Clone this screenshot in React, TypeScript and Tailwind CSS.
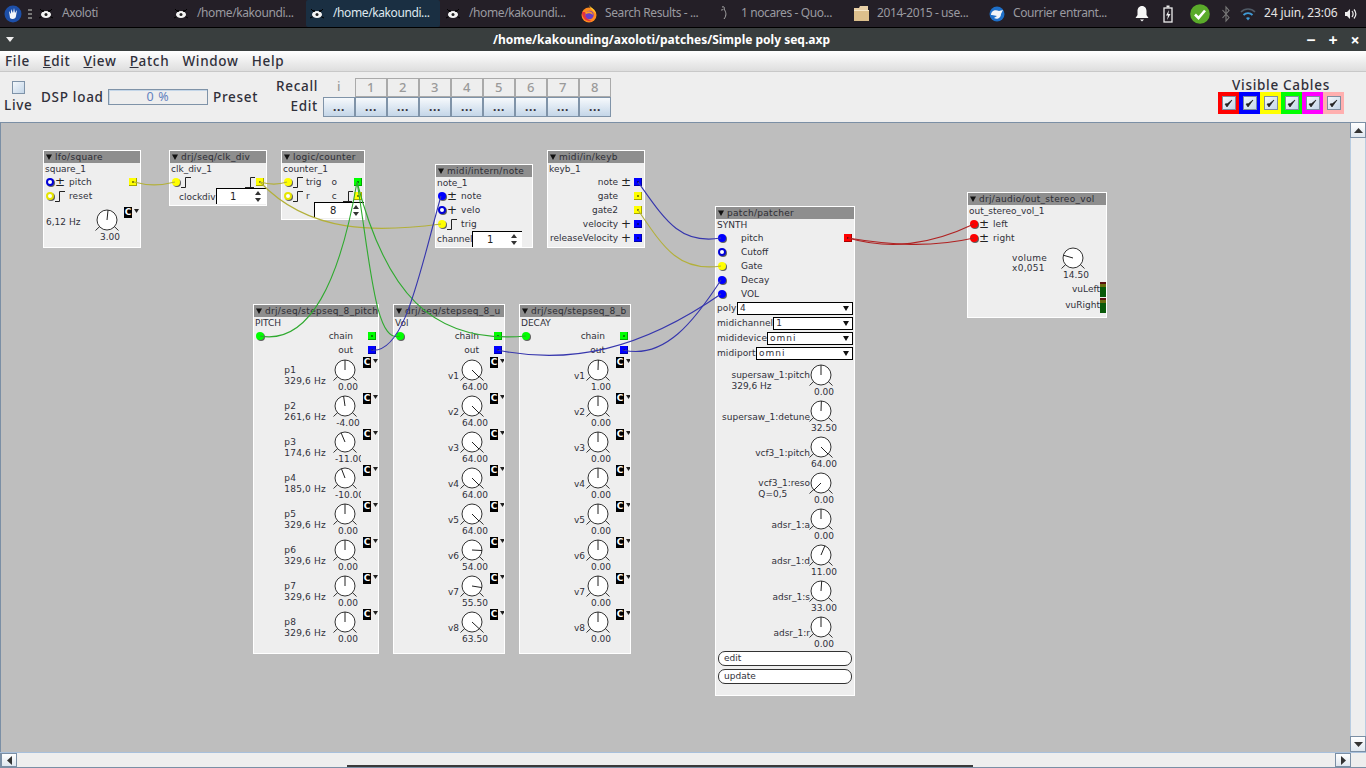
import React from "react";

const UI = "font-['Noto_Sans',sans-serif]";
const NODE_FONT = "font-['DejaVu_Sans',sans-serif]";

function BugIcon() {
  return (
    <svg width="16" height="16" viewBox="0 0 16 16" className="shrink-0">
      <path d="M2 3 L5 6 M14 3 L11 6 M1 12 L5 10 M15 12 L11 10" stroke="#000" strokeWidth="1" />
      <ellipse cx="8" cy="8.5" rx="5" ry="3.6" fill="#f4f4f4" />
      <circle cx="8" cy="8.5" r="1.5" fill="#222" />
      <circle cx="5" cy="5" r="1" fill="#000" />
      <circle cx="11" cy="5" r="1" fill="#000" />
    </svg>
  );
}
function FirefoxIcon() {
  return (
    <svg width="16" height="18" viewBox="0 0 16 18" className="shrink-0">
      <circle cx="8" cy="10" r="7.5" fill="#ff8a1f" />
      <path d="M8 0 C10 3 14 4 15 9 C13 6 10 5 8 0Z" fill="#ffcf30" />
      <path d="M1 7 C1 14 6 17 11 16 C7 15 4 12 4 7Z" fill="#e5313c" />
      <circle cx="8.5" cy="10" r="4.2" fill="#6a3ec6" />
      <path d="M5 7 C8 5 12 7 12 10 C10 8 7 8 5 9Z" fill="#ff9b26" />
    </svg>
  );
}
function QuodIcon() {
  return (
    <svg width="16" height="18" viewBox="0 0 16 18" className="shrink-0">
      <path d="M5 2 C7 1 8 3 7 4 C9 7 10 10 7 14 M4 5 C5 5 6 5 6 4" stroke="#aaa" strokeWidth="1" fill="none" />
    </svg>
  );
}
function FolderIcon() {
  return (
    <svg width="16" height="17" viewBox="0 0 16 17" className="shrink-0">
      <path d="M1 3 H6 L7 1 H15 V16 H1Z" fill="#e9d0a6" />
      <rect x="1" y="5" width="15" height="11" fill="#dcbf8c" />
      <rect x="1" y="5" width="15" height="1" fill="#f5e6c8" />
    </svg>
  );
}
function ThunderIcon() {
  return (
    <svg width="16" height="17" viewBox="0 0 16 17" className="shrink-0">
      <circle cx="8" cy="9" r="7.5" fill="#1e6fc8" />
      <path d="M2 10 C2 6 6 4 10 6 L14 5 L12 9 C12 13 8 15 5 13 L8 11 L3 10Z" fill="#f2f5f8" />
    </svg>
  );
}

function Tab({ icon, text, active, first }: { icon: React.ReactNode; text: string; active?: boolean; first?: boolean }) {
  return (
    <div className={`${first ? "w-[135px]" : "w-[136px]"} shrink-0 h-full flex items-center`}>
      <div
        className={`flex items-center gap-[8px] pl-[3px] h-[27px] w-[134px] rounded-[2px] ${
          active ? "bg-[#1a2f42] text-[#dfe8ef]" : "text-[#9a9aa0]"
        }`}
      >
        {icon}
        <span className="text-[12px] tracking-[-0.4px] whitespace-nowrap -mt-[2px]">{text}</span>
      </div>
    </div>
  );
}

function Taskbar() {
  return (
    <div className={`h-[27px] bg-[#241f27] flex items-center ${UI} shrink-0`}>
      <div className="w-[35px] shrink-0 h-full flex items-center pl-[4px] gap-[6px]">
        <svg width="18" height="18" viewBox="0 0 18 18" className="shrink-0">
          <circle cx="9" cy="9" r="8.5" fill="#1d4fa8" />
          <path d="M5 6 L7 9 L7 4 L9 8 L10 3 L11 8 L13 5 L12 11 C12 14 8 15 6 13Z" fill="#f4f6fa" />
        </svg>
        <div className="flex flex-col gap-[2px]">
          <div className="w-[4px] h-[2px] bg-[#777]" />
          <div className="w-[4px] h-[2px] bg-[#777]" />
          <div className="w-[4px] h-[2px] bg-[#777]" />
        </div>
      </div>
      <Tab first icon={<BugIcon />} text="Axoloti" />
      <Tab icon={<BugIcon />} text="/home/kakoundi..." />
      <Tab active icon={<BugIcon />} text="/home/kakoundi..." />
      <Tab icon={<BugIcon />} text="/home/kakoundi..." />
      <Tab icon={<FirefoxIcon />} text="Search Results - ..." />
      <Tab icon={<QuodIcon />} text="1 nocares - Quo..." />
      <Tab icon={<FolderIcon />} text="2014-2015 - use..." />
      <Tab icon={<ThunderIcon />} text="Courrier entrant..." />
      <div className="flex items-center h-full">
        <svg width="14" height="17" viewBox="0 0 14 17" className="ml-[13px] shrink-0">
          <path d="M7 1 C10 1 11.5 3.5 11.5 6 V10 L13.5 13 H0.5 L2.5 10 V6 C2.5 3.5 4 1 7 1Z" fill="#f6f6f6" />
          <path d="M5 14.5 H9 L7 16.5Z" fill="#f6f6f6" />
        </svg>
        <svg width="10" height="18" viewBox="0 0 10 18" className="ml-[14px] shrink-0">
          <rect x="1" y="3" width="8" height="14" fill="none" stroke="#eee" strokeWidth="1.3" />
          <rect x="3.5" y="0.5" width="3" height="2" fill="#eee" />
          <path d="M6 5 L3 10.5 H5 L4 15 L7.5 9 H5.3Z" fill="#eee" />
        </svg>
        <svg width="20" height="20" viewBox="0 0 20 20" className="ml-[17px] shrink-0">
          <circle cx="10" cy="10" r="9.8" fill="#5aaa2a" />
          <path d="M5 10.5 L8.5 14 L15 6.5" stroke="#fff" strokeWidth="2.6" fill="none" />
        </svg>
        <svg width="8" height="18" viewBox="0 0 8 18" className="ml-[12px] shrink-0">
          <path d="M0.5 5 L7 12.5 L4 16 V2 L7 5.5 L0.5 13" stroke="#7a7a7a" strokeWidth="1.1" fill="none" />
        </svg>
        <svg width="16" height="16" viewBox="0 0 16 16" className="ml-[10px] shrink-0">
          <path d="M1 6 C5 2 11 2 15 6" stroke="#4f5a66" strokeWidth="1.6" fill="none" />
          <path d="M3.5 9 C6 6.5 10 6.5 12.5 9" stroke="#3f9ad6" strokeWidth="1.8" fill="none" />
          <path d="M6 12 C7 11 9 11 10 12 L8 14.5Z" fill="#3f9ad6" />
        </svg>
        <span className="ml-[8px] text-[12px] tracking-[-0.1px] text-[#e4e4e4] whitespace-nowrap -mt-[2px]">24 juin, 23:06</span>
        <svg width="14" height="14" viewBox="0 0 14 14" className="ml-[7px] shrink-0">
          <path d="M1 5 H3 L6 2 V12 L3 9 H1Z" fill="#eee" />
          <path d="M8 4 C9.5 6 9.5 8 8 10 M10 2.5 C12.5 5.5 12.5 8.5 10 11.5" stroke="#eee" strokeWidth="1.2" fill="none" />
        </svg>
      </div>
    </div>
  );
}

function TitleBar() {
  return (
    <div className={`h-[24px] bg-[#393e3e] border-t border-[#000] flex items-center relative ${UI} shrink-0`}>
      <svg width="8" height="5" viewBox="0 0 8 5" className="ml-[6px]">
        <path d="M0 0 H8 L4 5Z" fill="#eee" />
      </svg>
      <div className="flex-1 text-center text-white font-bold text-[12px] whitespace-nowrap pl-[9px]">
        /home/kakounding/axoloti/patches/Simple poly seq.axp
      </div>
      <div className="flex items-center text-white font-bold text-[16px] leading-none">
        <span className="w-[22px] text-center">−</span>
        <span className="w-[22px] text-center">+</span>
        <span className="w-[22px] text-center">×</span>
      </div>
    </div>
  );
}

function MenuBar() {
  const M = ({ t, u }: { t: string; u?: boolean }) => (
    <span>
      {u ? <span className="underline">{t[0]}</span> : t[0]}
      {t.slice(1)}
    </span>
  );
  return (
    <div className={`h-[21px] bg-gradient-to-b from-[#ffffff] to-[#dedede] border-b border-[#c8c8c8] flex items-center pl-[5px] gap-[13px] text-[13.5px] font-medium tracking-[0.7px] text-[#30303a] ${UI} shrink-0`}>
      <M t="File" />
      <M t="Edit" u />
      <M t="View" u />
      <M t="Patch" u />
      <M t="Window" />
      <M t="Help" />
    </div>
  );
}

function PresetBtn({ t, edit }: { t: string; edit?: boolean }) {
  return edit ? (
    <div className="w-[32px] h-[20px] border border-[#7f93a8] bg-gradient-to-b from-[#f6f9fc] to-[#c4d6e8] flex items-center justify-center text-[12px] font-bold text-[#30303a] leading-none">
      {t}
    </div>
  ) : (
    <div className="w-[32px] h-[19px] border border-[#aaa] bg-[#eee] flex items-center justify-center text-[13px] text-[#9a9a9a] leading-none">
      {t}
    </div>
  );
}

function Toolbar() {
  const bgs = [
    "bg-[#ff0000]",
    "bg-[#0000ff]",
    "bg-[#ffff00]",
    "bg-[#00ff00]",
    "bg-[#ff00ff]",
    "bg-[#ffafaf]",
  ];
  return (
    <div className={`h-[50px] bg-[#eeeeee] flex items-center text-[13.5px] font-medium tracking-[0.7px] text-[#30303a] ${UI} shrink-0`}>
      <div className="w-[37px] pl-[4px] flex flex-col items-start">
        <div className="ml-[8px] w-[13px] h-[13px] border border-[#7f93a8] bg-gradient-to-br from-[#f4f8fb] to-[#c4d6e8]" />
        <div className="leading-[18px] mt-[2px]">Live</div>
      </div>
      <div className="ml-[4px] w-[67px]">DSP load</div>
      <div className="w-[100px] h-[16px] border border-[#7f93a8] bg-[#eeeeee] shadow-[inset_1px_1px_0_#c4d6e8] flex items-center justify-center text-[12.5px] font-normal text-[#6382bf]">
        0 %
      </div>
      <div className="ml-[5px] w-[63px]">Preset</div>
      <div className="flex flex-col">
        <div className="flex items-center h-[19px]">
          <div className="w-[42px] -mt-[1px]">Recall</div>
          <div className="ml-[5px] w-[32px] text-center text-[#9a9a9a] font-medium text-[13px]">i</div>
          {["1", "2", "3", "4", "5", "6", "7", "8"].map((n) => (
            <PresetBtn key={n} t={n} />
          ))}
        </div>
        <div className="flex items-center h-[20px]">
          <div className="w-[42px] text-right">Edit</div>
          <div className="ml-[5px] flex">
            {[0, 1, 2, 3, 4, 5, 6, 7, 8].map((n) => (
              <PresetBtn key={n} t="..." edit />
            ))}
          </div>
        </div>
      </div>
      <div className="ml-auto mr-[22px] flex flex-col items-center">
        <div className="leading-[14px] mt-[-2px]">Visible Cables</div>
        <div className="flex">
          {bgs.map((b) => (
            <div key={b} className={`w-[21px] h-[22px] ${b} flex items-center justify-center`}>
              <div className="w-[14px] h-[14px] border border-[#7f8ea0] bg-gradient-to-br from-[#f4f8fb] to-[#c4d6e8] flex items-center justify-center">
                <svg width="9" height="9" viewBox="0 0 9 9">
                  <path d="M1 5 L3 8 L8 1 L3.6 4.6 Z" fill="#222" stroke="#222" strokeWidth="0.7" />
                </svg>
              </div>
            </div>
          ))}
        </div>
      </div>
    </div>
  );
}

/* ---------- Node parts ---------- */
function T({ children, cls = "" }: { children: React.ReactNode; cls?: string }) {
  return <span className={`mt-[2px] whitespace-nowrap ${cls}`}>{children}</span>;
}
function Inlet({ c, hollow }: { c: string; hollow?: boolean }) {
  const color =
    c === "b"
      ? hollow
        ? "border-[2px] border-[#0000d8] bg-white"
        : "bg-[#0000ff]"
      : c === "y"
      ? hollow
        ? "border-[2px] border-[#e6e600] bg-white"
        : "bg-[#ffff00]"
      : c === "g"
      ? "bg-[#00ff00]"
      : "bg-[#ff0000]";
  return (
    <div className={`w-[8px] h-[8px] rounded-full shrink-0 ml-[2px] ${color} shadow-[1px_1px_0_rgba(0,0,0,0.6)]`} />
  );
}
function Outlet({ c }: { c: string }) {
  const color =
    c === "b" ? "bg-[#0000ff]" : c === "y" ? "bg-[#ffff00]" : c === "g" ? "bg-[#00ff00]" : "bg-[#ff0000]";
  return (
    <div className={`w-[8px] h-[8px] shrink-0 ${color} shadow-[inset_-1px_-1px_0_rgba(0,0,0,0.35)] flex items-center justify-center`}>
      <div className="w-[2px] h-[2px] bg-black/45" />
    </div>
  );
}
function PulseUp() {
  return (
    <svg width="10" height="11" viewBox="0 0 10 11" className="shrink-0">
      <path d="M0 10.5 H4.5 V0.5 H10" stroke="#222" strokeWidth="1" fill="none" />
    </svg>
  );
}
function PulseDown() {
  return (
    <svg width="10" height="11" viewBox="0 0 10 11" className="shrink-0">
      <path d="M0 10.5 H9 M5.5 10.5 V0.5 H10" stroke="#222" strokeWidth="1" fill="none" />
    </svg>
  );
}
function Sym({ s }: { s: "pm" | "p" | "pulse" }) {
  return (
    <div className="w-[12px] shrink-0 flex items-center justify-center text-[12px] leading-none text-[#222]">
      {s === "pm" ? "±" : s === "p" ? "+" : <PulseUp />}
    </div>
  );
}
function InRow({ c, hollow, s, t }: { c: string; hollow?: boolean; s: "pm" | "p" | "pulse"; t: string }) {
  return (
    <div className="h-[14px] flex items-center">
      <Inlet c={c} hollow={hollow} />
      <Sym s={s} />
      <T cls="ml-[3px] tracking-[0.1px]">{t}</T>
    </div>
  );
}
function Spin({ v, w, vx }: { v: string; w: string; vx: string }) {
  return (
    <div className={`${w} h-[16px] bg-white border-t border-l border-black flex items-center text-[10px] text-[#222] relative shrink-0`}>
      <span className={vx}>{v}</span>
      <svg width="6" height="11" viewBox="0 0 6 11" className="ml-auto mr-[5px]">
        <path d="M3 0 L6 4 H0Z M3 11 L0 7 H6Z" fill="#333" />
      </svg>
    </div>
  );
}
function Header({ t }: { t: string }) {
  return (
    <div className="h-[12px] bg-[#8e8e8e] flex items-center pl-[2px] text-[#2c2c33] tracking-[0.3px] whitespace-nowrap overflow-hidden shrink-0">
      <svg width="6" height="6" viewBox="0 0 6 6" className="shrink-0 mr-[3px]">
        <path d="M0 0.5 H6 L3 6Z" fill="#111" />
      </svg>
      <span className="mt-[2px]">{t}</span>
    </div>
  );
}
function Name({ t }: { t: string }) {
  return <div className="h-[12px] leading-[12px] pl-[1px] whitespace-nowrap">{t}</div>;
}
function Knob({ a }: { a: number }) {
  const r = (a * Math.PI) / 180;
  const x = 13 + Math.sin(r) * 10;
  const y = 13 - Math.cos(r) * 10;
  return (
    <svg width="26" height="24" viewBox="0 0 26 24" className="block shrink-0">
      <path d="M1.5 23.5 L6 19.2 M24.5 23.5 L20 19.2" stroke="#333" strokeWidth="1" />
      <circle cx="13" cy="13" r="10" fill="#fff" stroke="#333" strokeWidth="1" />
      <line x1="13" y1="13" x2={x} y2={y} stroke="#222" strokeWidth="1" />
    </svg>
  );
}
function CBox() {
  return (
    <div className="flex items-start shrink-0">
      <div className="w-[8px] h-[11px] bg-black text-white text-[9px] font-bold leading-[11px] text-center">C</div>
      <svg width="5" height="4" viewBox="0 0 5 4" className="ml-[2px] mt-[2px]">
        <path d="M0 0 H5 L2.5 4Z" fill="#222" />
      </svg>
    </div>
  );
}
function KnobCol({ a, v }: { a: number; v: string }) {
  return (
    <div className="w-[30px] shrink-0">
      <Knob a={a} />
      <div className="ml-[3px] w-[26px] h-[12px] leading-[12px] text-center whitespace-nowrap overflow-hidden">{v}</div>
    </div>
  );
}
function Param({
  l1,
  l2,
  a,
  v,
  lw,
  c = true,
  over,
}: {
  l1: string;
  l2?: string;
  a: number;
  v: string;
  lw: string;
  c?: boolean;
  over?: boolean;
}) {
  return (
    <div className="h-[36px] flex items-start">
      <div className={`${lw} h-[36px] pt-[2px] flex items-center justify-end shrink-0`}>
        <div className={`whitespace-nowrap leading-[11px] ${over ? "-mr-[2px]" : ""}`}>
          <div>{l1}</div>
          {l2 ? <div>{l2}</div> : null}
        </div>
      </div>
      <KnobCol a={a} v={v} />
      {c ? (
        <div className="ml-[1px]">
          <CBox />
        </div>
      ) : null}
    </div>
  );
}
function Node({ pos, title, name, children }: { pos: string; title: string; name: string; children: React.ReactNode }) {
  return (
    <div className={`absolute ${pos} bg-[#eeeeee] border border-white ${NODE_FONT} text-[9px] text-[#30303a] flex flex-col overflow-hidden`}>
      <Header t={title} />
      <Name t={name} />
      {children}
    </div>
  );
}
function RightRow({ t, c, s }: { t: string; c: string; s?: "pm" | "p" }) {
  return (
    <div className="h-[14px] flex items-center justify-end mr-[2px]">
      <T>{t}</T>
      <div className="w-[16px] flex items-center justify-center text-[12px] leading-none text-[#222]">
        {s === "pm" ? "±" : s === "p" ? "+" : ""}
      </div>
      <Outlet c={c} />
    </div>
  );
}
function SeqRows({ inC }: { inC: string }) {
  return (
    <>
      <div className="h-[14px] flex items-center">
        <Inlet c={inC} />
        <T cls="ml-auto">chain</T>
        <div className="ml-[15px] mr-[2px]">
          <Outlet c="g" />
        </div>
      </div>
      <div className="h-[14px] flex items-center justify-end">
        <T>out</T>
        <div className="ml-[15px] mr-[2px]">
          <Outlet c="b" />
        </div>
      </div>
    </>
  );
}
function Combo({ label, w, v, wide }: { label: string; w: string; v: string; wide?: boolean }) {
  return (
    <div className="h-[15px] flex items-center pl-[1px] whitespace-nowrap">
      <span className="flex-1 tracking-[0.1px]">{label}</span>
      <div className={`${w} h-[13px] bg-white border border-black flex items-center pl-[2px] mr-[1px] ${wide ? "tracking-[1px]" : ""}`}>
        {v}
        <svg width="6" height="5" viewBox="0 0 6 5" className="ml-auto mr-[3px]">
          <path d="M0 0 H6 L3 5Z" fill="#111" />
        </svg>
      </div>
    </div>
  );
}

function Cables() {
  const y = "#b3b03a";
  const g = "#2faa2f";
  const b = "#3636ad";
  const r = "#b02222";
  const paths: [string, string][] = [
    ["M134 182 C148 186 160 186 175 182", y],
    ["M260 182 C270 185 278 185 287 182", y],
    ["M260 182 C310 235 380 232 441 224", y],
    ["M638 210 C665 250 680 272 721 266", y],
    ["M357 182 C340 280 310 345 260 336", g],
    ["M357 182 C370 260 375 345 400 336", g],
    ["M357 182 C385 290 430 345 526 336", g],
    ["M638 182 C665 220 680 245 721 238", b],
    ["M371 350 C405 355 420 270 441 196", b],
    ["M497 350 C570 365 640 350 721 294", b],
    ["M623 350 C665 360 695 320 721 280", b],
    ["M848 238 C890 250 930 245 974 224", r],
    ["M848 238 C890 245 930 248 974 238", r],
  ];
  return (
    <svg width="1350" height="630" className="absolute left-0 top-0 pointer-events-none">
      <g transform="translate(0,-122)">
        {paths.map(([d, c], i) => (
          <path key={i} d={d} stroke={c} strokeWidth="1.1" fill="none" />
        ))}
      </g>
    </svg>
  );
}

function Canvas() {
  const pitch = [
    ["p1", "329,6 Hz", 0, "0.00"],
    ["p2", "261,6 Hz", -8, "-4.00"],
    ["p3", "174,6 Hz", -23, "-11.00"],
    ["p4", "185,0 Hz", -21, "-10.00"],
    ["p5", "329,6 Hz", 0, "0.00"],
    ["p6", "329,6 Hz", 0, "0.00"],
    ["p7", "329,6 Hz", 0, "0.00"],
    ["p8", "329,6 Hz", 0, "0.00"],
  ] as const;
  const vol = [
    ["v1", 135, "64.00"],
    ["v2", 135, "64.00"],
    ["v3", 135, "64.00"],
    ["v4", 135, "64.00"],
    ["v5", 135, "64.00"],
    ["v6", 93, "54.00"],
    ["v7", 99, "55.50"],
    ["v8", 133, "63.50"],
  ] as const;
  const dec = [
    ["v1", 2, "1.00"],
    ["v2", 0, "0.00"],
    ["v3", 0, "0.00"],
    ["v4", 0, "0.00"],
    ["v5", 0, "0.00"],
    ["v6", 0, "0.00"],
    ["v7", 0, "0.00"],
    ["v8", 0, "0.00"],
  ] as const;
  const patch: [string, string | undefined, number, string][] = [
    ["supersaw_1:pitch", "329,6 Hz", 0, "0.00"],
    ["supersaw_1:detune", undefined, 2, "32.50"],
    ["vcf3_1:pitch", undefined, 135, "64.00"],
    ["vcf3_1:reso", "Q=0,5", -135, "0.00"],
    ["adsr_1:a", undefined, 0, "0.00"],
    ["adsr_1:d", undefined, 23, "11.00"],
    ["adsr_1:s", undefined, 4, "33.00"],
    ["adsr_1:r", undefined, 0, "0.00"],
  ];
  return (
    <div className="relative w-[1350px] h-[630px] bg-[#bebebe] shadow-[inset_1px_1px_0_#7b8fa5] overflow-hidden">
      <Node pos="left-[43px] top-[28px] w-[98px] h-[98px]" title="lfo/square" name="square_1">
        <div className="h-[14px] flex items-center">
          <Inlet c="b" hollow />
          <Sym s="pm" />
          <T cls="ml-[3px] tracking-[0.1px]">pitch</T>
          <div className="ml-auto mr-[3px]">
            <Outlet c="y" />
          </div>
        </div>
        <InRow c="y" hollow s="pulse" t="reset" />
        <div className="h-[36px] flex items-start">
          <div className="w-[50px] h-[36px] pt-[13px] pl-[2px] whitespace-nowrap">6,12 Hz</div>
          <div className="mt-[4px] flex items-start">
            <KnobCol a={6} v="3.00" />
            <CBox />
          </div>
        </div>
      </Node>

      <Node pos="left-[169px] top-[28px] w-[98px] h-[56px]" title="drj/seq/clk_div" name="clk_div_1">
        <div className="h-[14px] flex items-center">
          <Inlet c="y" />
          <Sym s="pulse" />
          <div className="ml-auto flex items-center gap-[1px] mr-[2px]">
            <PulseDown />
            <Outlet c="y" />
          </div>
        </div>
        <div className="h-[16px] mt-[-1px] flex items-center">
          <T cls="ml-[9px] w-[37px] mt-[3px]">clockdiv</T>
          <Spin v="1" w="w-[50px]" vx="ml-[13px]" />
        </div>
      </Node>

      <Node pos="left-[281px] top-[28px] w-[84px] h-[70px]" title="logic/counter" name="counter_1">
        <div className="h-[14px] flex items-center">
          <Inlet c="y" />
          <Sym s="pulse" />
          <T cls="ml-[2px]">trig</T>
          <T cls="ml-[10px]">o</T>
          <div className="ml-auto mr-[2px]">
            <Outlet c="g" />
          </div>
        </div>
        <div className="h-[14px] flex items-center">
          <Inlet c="y" hollow />
          <Sym s="pulse" />
          <T cls="ml-[2px]">r</T>
          <T cls="ml-[22px]">c</T>
          <div className="ml-auto flex items-center gap-[1px] mr-[2px]">
            <PulseDown />
            <Outlet c="y" />
          </div>
        </div>
        <div className="flex justify-end -mt-[1px]">
          <Spin v="8" w="w-[50px]" vx="ml-[15px]" />
        </div>
      </Node>

      <Node pos="left-[435px] top-[42px] w-[98px] h-[84px]" title="midi/intern/note" name="note_1">
        <InRow c="b" s="pm" t="note" />
        <InRow c="b" hollow s="p" t="velo" />
        <InRow c="y" s="pulse" t="trig" />
        <div className="h-[16px] flex items-center">
          <T cls="ml-[1px] w-[35px]">channel</T>
          <Spin v="1" w="w-[50px]" vx="ml-[14px]" />
        </div>
      </Node>

      <Node pos="left-[547px] top-[28px] w-[98px] h-[98px]" title="midi/in/keyb" name="keyb_1">
        <RightRow t="note" c="b" s="pm" />
        <RightRow t="gate" c="y" />
        <RightRow t="gate2" c="y" />
        <RightRow t="velocity" c="b" s="p" />
        <RightRow t="releaseVelocity" c="b" s="p" />
      </Node>

      <Node pos="left-[253px] top-[182px] w-[126px] h-[350px]" title="drj/seq/stepseq_8_pitch" name="PITCH">
        <SeqRows inC="g" />
        {pitch.map(([l1, l2, a, v]) => (
          <Param key={l1} l1={l1} l2={l2} a={a} v={v} lw="w-[78px] pr-[6px] tracking-[0.2px]" />
        ))}
      </Node>

      <Node pos="left-[393px] top-[182px] w-[112px] h-[350px]" title="drj/seq/stepseq_8_u" name="Vol">
        <SeqRows inC="g" />
        {vol.map(([l1, a, v]) => (
          <Param key={l1} l1={l1} a={a} v={v} lw="w-[65px]" />
        ))}
      </Node>

      <Node pos="left-[519px] top-[182px] w-[112px] h-[350px]" title="drj/seq/stepseq_8_b" name="DECAY">
        <SeqRows inC="g" />
        {dec.map(([l1, a, v]) => (
          <Param key={l1} l1={l1} a={a} v={v} lw="w-[65px]" />
        ))}
      </Node>

      <Node pos="left-[715px] top-[84px] w-[140px] h-[490px]" title="patch/patcher" name="SYNTH">
        <div className="h-[14px] flex items-center">
          <Inlet c="b" />
          <T cls="ml-[15px]">pitch</T>
          <div className="ml-auto mr-[2px]">
            <Outlet c="r" />
          </div>
        </div>
        {[
          ["b", true, "Cutoff"],
          ["y", false, "Gate"],
          ["b", false, "Decay"],
          ["b", false, "VOL"],
        ].map(([c, h, t]) => (
          <div key={t as string} className="h-[14px] flex items-center">
            <Inlet c={c as string} hollow={h as boolean} />
            <T cls="ml-[15px]">{t as string}</T>
          </div>
        ))}
        <Combo label="poly" w="w-[116px]" v="4" />
        <Combo label="midichannel" w="w-[80px]" v="1" />
        <Combo label="mididevice" w="w-[87px]" v="omni" wide />
        <Combo label="midiport" w="w-[97px]" v="omni" wide />
        <div className="h-[1px]" />
        {patch.map(([l1, l2, a, v]) => (
          <Param key={l1} l1={l1} l2={l2} a={a} v={v} lw="w-[92px]" c={false} over />
        ))}
        <div className="mx-[2px] mt-[1px] h-[15px] rounded-[7px] border border-[#333] bg-white pl-[5px] leading-[13px]">edit</div>
        <div className="mx-[2px] mt-[3px] h-[15px] rounded-[7px] border border-[#333] bg-white pl-[5px] leading-[13px]">update</div>
      </Node>

      <Node pos="left-[967px] top-[70px] w-[140px] h-[126px]" title="drj/audio/out_stereo_vol" name="out_stereo_vol_1">
        <InRow c="r" s="pm" t="left" />
        <InRow c="r" s="pm" t="right" />
        <div className="h-[36px] flex items-start">
          <div className="w-[92px] h-[36px] pl-[44px] pt-[8px] leading-[10px] tracking-[0.3px] whitespace-nowrap">
            <div>volume</div>
            <div>x0,051</div>
          </div>
          <KnobCol a={-74} v="14.50" />
        </div>
        <div className="flex flex-col items-end">
          {["vuLeft", "vuRight"].map((t) => (
            <div key={t} className="h-[16px] flex items-center">
              <T>{t}</T>
              <div className="w-[6px] h-[15px] flex flex-col">
                <div className="h-[2px] bg-[#5a1010]" />
                <div className="h-[3px] bg-[#6b6b10]" />
                <div className="flex-1 bg-[#0a5a0a]" />
              </div>
            </div>
          ))}
        </div>
      </Node>

      <Cables />
    </div>
  );
}

function ArrowBtn({ d, cls }: { d: string; cls: string }) {
  return (
    <div className={`${cls} shrink-0 bg-gradient-to-b from-[#ffffff] to-[#dfe7ef] border border-[#7b8fa5] flex items-center justify-center`}>
      <svg width="9" height="9" viewBox="0 0 9 9">
        <path d={d} fill="#333" />
      </svg>
    </div>
  );
}

function VBar() {
  return (
    <div className="w-[16px] h-[630px] bg-[#eeeeee] flex flex-col shrink-0">
      <ArrowBtn d="M0 7 H9 L4.5 2Z" cls="w-[16px] h-[16px]" />
      <div className="flex-1 border-x border-[#b8cce0]" />
      <ArrowBtn d="M0 2 H9 L4.5 7Z" cls="w-[16px] h-[16px]" />
    </div>
  );
}

function HBar() {
  return (
    <div className="h-[16px] bg-[#eeeeee] border-t border-[#a8c0dc] border-b border-b-[#7b8fa5] flex relative shrink-0">
      <div className="w-[1px] bg-[#7b8fa5]" />
      <ArrowBtn d="M7 0 V9 L2 4.5Z" cls="w-[16px] h-[14px]" />
      <div className="flex-1" />
      <ArrowBtn d="M2 0 V9 L7 4.5Z" cls="w-[16px] h-[14px]" />
      <div className="w-[15px]" />
      <div className="absolute left-[347px] bottom-0 w-[626px] h-[2px] bg-[#3a3a3a]" />
    </div>
  );
}

export default function App() {
  return (
    <div className="w-[1366px] h-[768px] overflow-hidden flex flex-col bg-[#eeeeee]">
      <Taskbar />
      <TitleBar />
      <MenuBar />
      <Toolbar />
      <div className="flex shrink-0">
        <Canvas />
        <VBar />
      </div>
      <HBar />
    </div>
  );
}
